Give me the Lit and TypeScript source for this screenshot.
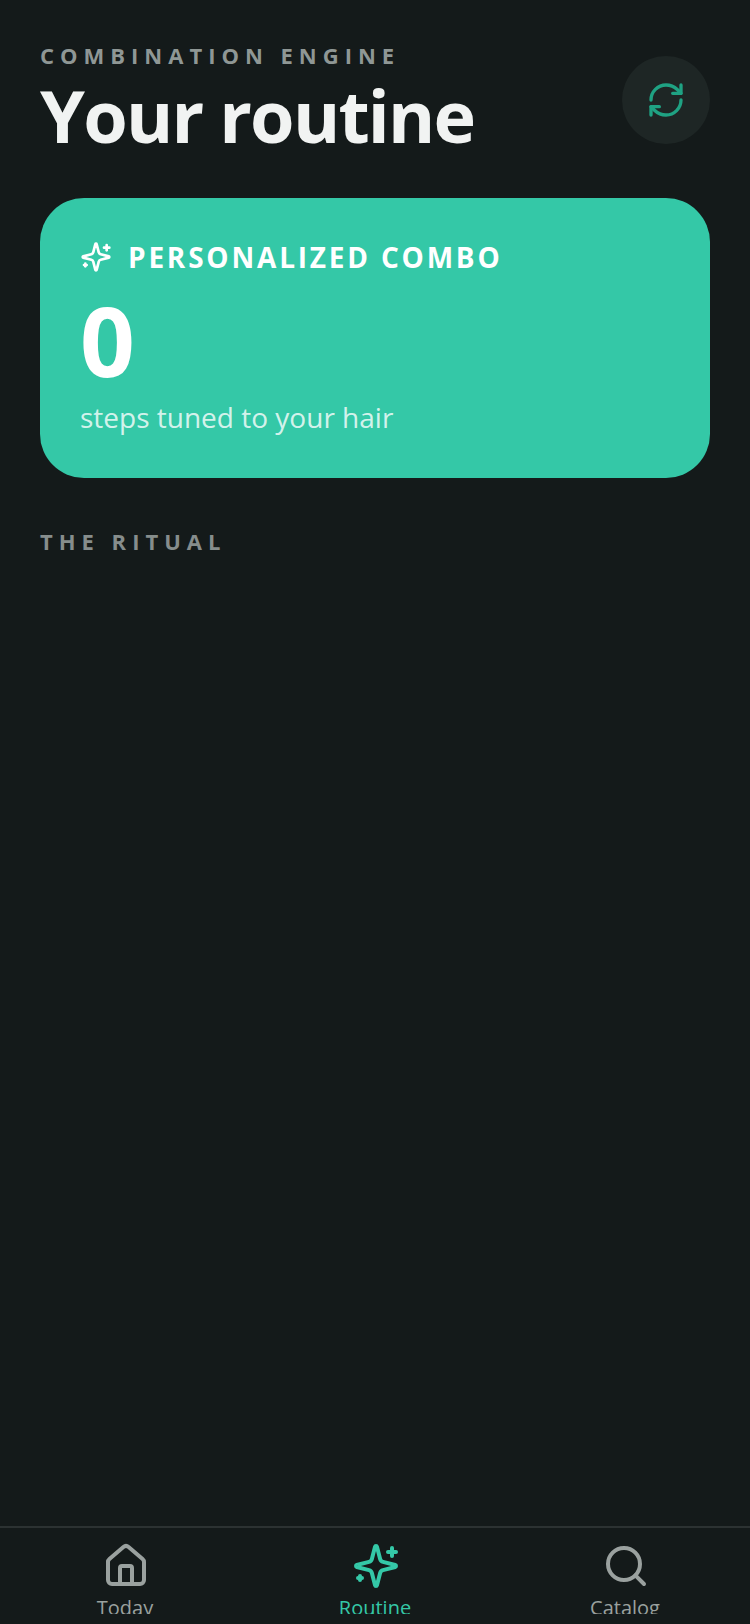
import { css, html, LitElement, svg } from 'lit'
import { customElement } from 'lit/decorators.js'

const sparkle = svg`
  <path d="M9.937 15.5A2 2 0 0 0 8.500 14.063l-6.135-1.582a.5.5 0 0 1 0-.962L8.500 9.936A2 2 0 0 0 9.937 8.500l1.582-6.135a.5.5 0 0 1 .963 0L14.063 8.500A2 2 0 0 0 15.500 9.937l6.135 1.581a.5.5 0 0 1 0 .964L15.500 14.063a2 2 0 0 0-1.437 1.437l-1.582 6.135a.5.5 0 0 1-.963 0z"/>
  <path d="M20 3v4"/>
  <path d="M22 5h-4"/>
  <path d="M4 17v2"/>
  <path d="M5 18H3"/>
`

@customElement('app-root')
export class AppRoot extends LitElement {
  static styles = css`
    :host {
      display: flex;
      flex-direction: column;
      height: 1624px;
      background: #141a1a;
      font-family: 'Open Sans', sans-serif;
      overflow: hidden;
    }

    main {
      flex: 1;
      padding: 41px 40px 0;
    }

    .header {
      display: flex;
      justify-content: space-between;
      align-items: flex-start;
    }

    .eyebrow {
      font-size: 22px;
      font-weight: 700;
      line-height: 28px;
      letter-spacing: 6px;
      color: #8f9795;
    }

    h1 {
      margin: 1px 0 0;
      font-size: 72px;
      font-weight: 700;
      line-height: 90px;
      letter-spacing: -1.8px;
      color: #f1f3f2;
    }

    .refresh {
      width: 88px;
      height: 88px;
      margin-top: 15px;
      border-radius: 50%;
      background: #1e2625;
      display: flex;
      align-items: center;
      justify-content: center;
      color: #1fa283;
    }

    .refresh svg {
      width: 40px;
      height: 40px;
    }

    .card {
      margin-top: 38px;
      height: 280px;
      box-sizing: border-box;
      padding: 40px;
      border-radius: 44px;
      background: #34c8a7;
      color: #fff;
    }

    .card-head {
      display: flex;
      align-items: center;
      gap: 16px;
      height: 38px;
      font-size: 28px;
      font-weight: 700;
      letter-spacing: 2.8px;
    }

    .card-head svg {
      width: 32px;
      height: 32px;
    }

    .count {
      font-size: 96px;
      font-weight: 700;
      line-height: 108px;
      margin-top: 10px;
    }

    .caption {
      font-size: 28px;
      line-height: 40px;
      margin-top: 3px;
      color: rgba(255, 255, 255, 0.8);
    }

    .section {
      margin-top: 49px;
      font-size: 22px;
      font-weight: 700;
      line-height: 28px;
      letter-spacing: 6px;
      color: #868d8c;
    }

    nav {
      height: 98px;
      flex: none;
      box-sizing: border-box;
      border-top: 2px solid #2c3232;
      display: grid;
      grid-template-columns: repeat(3, 1fr);
    }

    .tab {
      display: flex;
      flex-direction: column;
      align-items: center;
      padding-top: 14px;
      height: 86px;
      box-sizing: border-box;
      overflow: hidden;
      color: #9aa19f;
      font-size: 20px;
      line-height: 28px;
    }

    .tab.active {
      color: #34c8a7;
    }

    .tab svg {
      width: 48px;
      height: 48px;
      flex: none;
      margin: 0 0 4px 2px;
    }

    svg {
      display: block;
      fill: none;
      stroke: currentColor;
      stroke-width: 2;
      stroke-linecap: round;
      stroke-linejoin: round;
    }
  `

  render () {
    return html`
      <main>
        <div class="header">
          <div>
            <div class="eyebrow">COMBINATION ENGINE</div>
            <h1>Your routine</h1>
          </div>
          <div class="refresh">
            <svg viewBox="0 0 24 24">
              <path d="M3 12a9 9 0 0 1 9-9 9.750 9.750 0 0 1 6.740 2.740L21 8"/>
              <path d="M21 3v5h-5"/>
              <path d="M21 12a9 9 0 0 1-9 9 9.750 9.750 0 0 1-6.740-2.740L3 16"/>
              <path d="M8 16H3v5"/>
            </svg>
          </div>
        </div>
        <section class="card">
          <div class="card-head">
            <svg viewBox="0 0 24 24">${sparkle}</svg>
            <span>PERSONALIZED COMBO</span>
          </div>
          <div class="count">0</div>
          <div class="caption">steps tuned to your hair</div>
        </section>
        <div class="section">THE RITUAL</div>
      </main>
      <nav>
        <div class="tab">
          <svg viewBox="0 0 24 24">
            <path d="M15 21v-8a1 1 0 0 0-1-1h-4a1 1 0 0 0-1 1v8"/>
            <path d="M3 10a2 2 0 0 1 .709-1.528l7-5.999a2 2 0 0 1 2.582 0l7 5.999A2 2 0 0 1 21 10v9a2 2 0 0 1-2 2H5a2 2 0 0 1-2-2z"/>
          </svg>
          <span>Today</span>
        </div>
        <div class="tab active">
          <svg viewBox="0 0 24 24">${sparkle}</svg>
          <span>Routine</span>
        </div>
        <div class="tab">
          <svg viewBox="0 0 24 24">
            <circle cx="11" cy="11" r="8"/>
            <path d="m21 21-4.300-4.300"/>
          </svg>
          <span>Catalog</span>
        </div>
      </nav>
    `
  }
}
